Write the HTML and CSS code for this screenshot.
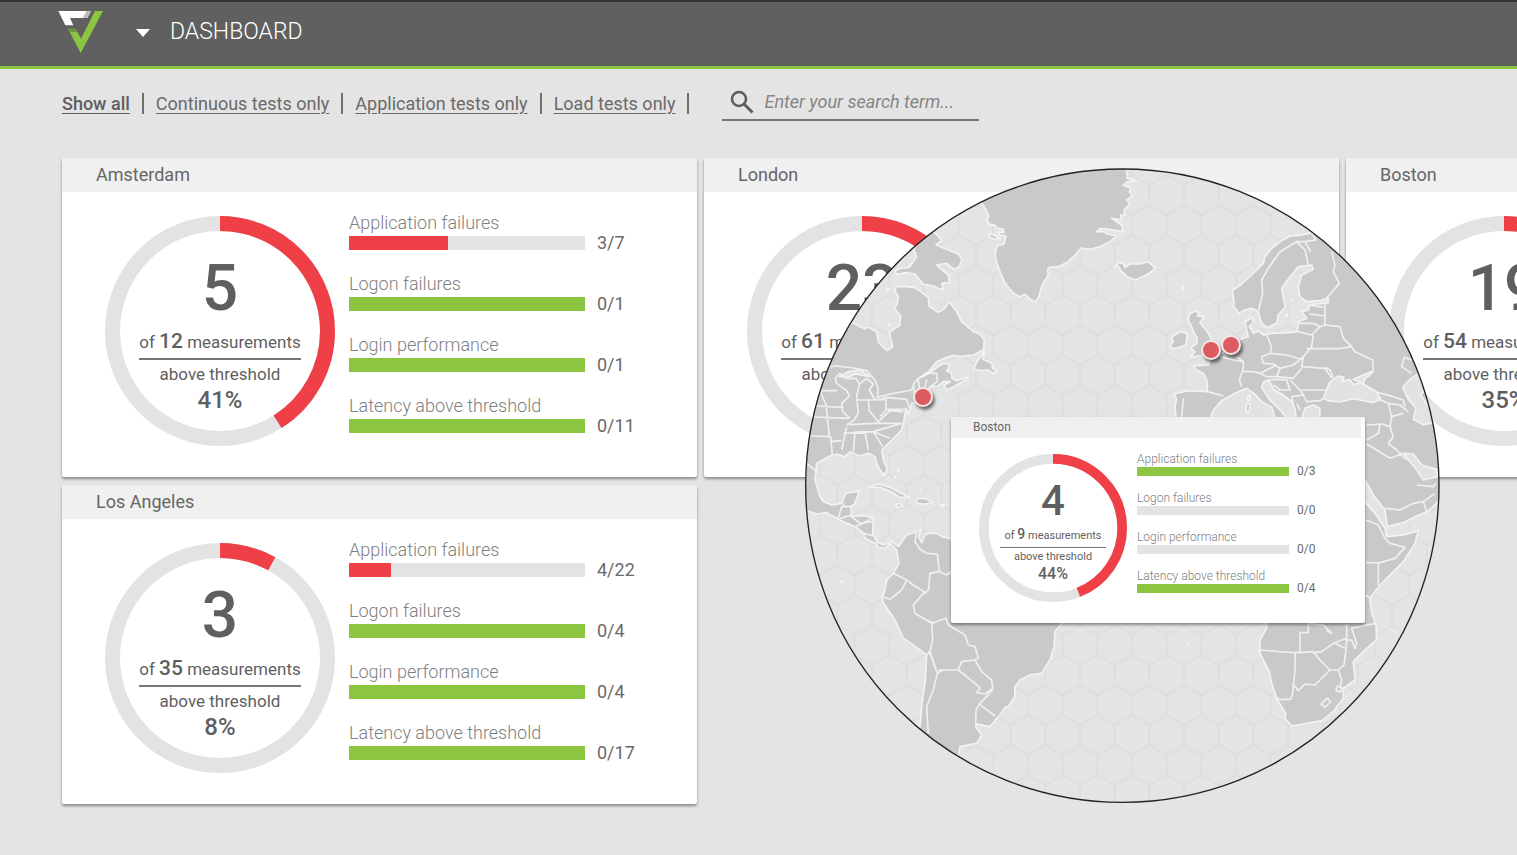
FILE: index.html
```html
<!DOCTYPE html>
<html lang="en">
<head>
<meta charset="utf-8">
<meta name="viewport" content="width=device-width, initial-scale=1">
<title>Dashboard</title>
<link rel="stylesheet" href="styles.css">
</head>
<body>
<header class="topbar">
  <svg class="logo" viewBox="176 32 138 130" aria-hidden="true">
    <path fill="#fff" d="M177 34H275L264 55H212L222 77H198Z"/>
    <path fill="#bdbdbd" d="M262 34H275L264 55H250Z"/>
    <path fill="#8cc540" d="M287 34H311L244 160L206 87H229L245 117Z"/>
    <path fill="#6f9440" d="M206 87H229L234 97H211Z"/>
  </svg>
  <button class="menu-toggle" type="button" aria-label="Open menu"><svg viewBox="0 0 14 8"><path fill="#fff" d="M0 0H14L7 8Z"/></svg></button>
  <h1 class="page-title">DASHBOARD</h1>
</header>
<main class="page">
  <div class="toolbar">
    <nav class="filters">
      <a class="filter filter-active" href="#all">Show all</a>
      <a class="filter" href="#continuous">Continuous tests only</a>
      <a class="filter" href="#application">Application tests only</a>
      <a class="filter" href="#load">Load tests only</a>
    </nav>
    <label class="search">
      <svg class="search-icon" viewBox="0 0 24 24" aria-hidden="true"><g fill="none" stroke="#5f5f5f"><circle cx="9" cy="9" r="7" stroke-width="2.6"/><path stroke-width="3" d="M14 14L22.500 22.500"/></g></svg>
      <input class="search-input" type="search" aria-label="Search" placeholder="Enter your search term...">
    </label>
  </div>
  <div class="board">
    <article class="card">
      <h2 class="card-title">Amsterdam</h2>
      <div class="card-body">
        <div class="donut">
          <svg viewBox="0 0 230 230"><circle class="track" cx="115" cy="115" r="107.500"/><circle class="arc" cx="115" cy="115" r="107.500" pathLength="100" stroke-dasharray="41 100"/></svg>
          <div class="summary"><b class="count">5</b><span class="total">of <b>12</b> measurements</span><span class="above">above threshold</span><b class="percent">41%</b></div>
        </div>
        <ul class="metrics">
          <li><span class="label">Application failures</span><span class="bar"><i class="fill bad" style="width:42%"></i></span><span class="value">3/7</span></li>
          <li><span class="label">Logon failures</span><span class="bar"><i class="fill"></i></span><span class="value">0/1</span></li>
          <li><span class="label">Login performance</span><span class="bar"><i class="fill"></i></span><span class="value">0/1</span></li>
          <li><span class="label">Latency above threshold</span><span class="bar"><i class="fill"></i></span><span class="value">0/11</span></li>
        </ul>
      </div>
    </article>
    <article class="card">
      <h2 class="card-title">London</h2>
      <div class="card-body">
        <div class="donut">
          <svg viewBox="0 0 230 230"><circle class="track" cx="115" cy="115" r="107.500"/><circle class="arc" cx="115" cy="115" r="107.500" pathLength="100" stroke-dasharray="37 100"/></svg>
          <div class="summary"><b class="count">23</b><span class="total">of <b>61</b> measurements</span><span class="above">above threshold</span></div>
        </div>
      </div>
    </article>
    <article class="card">
      <h2 class="card-title">Boston</h2>
      <div class="card-body">
        <div class="donut">
          <svg viewBox="0 0 230 230"><circle class="track" cx="115" cy="115" r="107.500"/><circle class="arc" cx="115" cy="115" r="107.500" pathLength="100" stroke-dasharray="35 100"/></svg>
          <div class="summary"><b class="count">19</b><span class="total">of <b>54</b> measurements</span><span class="above">above threshold</span><b class="percent">35%</b></div>
        </div>
      </div>
    </article>
    <article class="card">
      <h2 class="card-title">Los Angeles</h2>
      <div class="card-body">
        <div class="donut">
          <svg viewBox="0 0 230 230"><circle class="track" cx="115" cy="115" r="107.500"/><circle class="arc" cx="115" cy="115" r="107.500" pathLength="100" stroke-dasharray="8 100"/></svg>
          <div class="summary"><b class="count">3</b><span class="total">of <b>35</b> measurements</span><span class="above">above threshold</span><b class="percent">8%</b></div>
        </div>
        <ul class="metrics">
          <li><span class="label">Application failures</span><span class="bar"><i class="fill bad" style="width:18%"></i></span><span class="value">4/22</span></li>
          <li><span class="label">Logon failures</span><span class="bar"><i class="fill"></i></span><span class="value">0/4</span></li>
          <li><span class="label">Login performance</span><span class="bar"><i class="fill"></i></span><span class="value">0/4</span></li>
          <li><span class="label">Latency above threshold</span><span class="bar"><i class="fill"></i></span><span class="value">0/17</span></li>
        </ul>
      </div>
    </article>
  </div>
</main>
<section class="map" aria-label="Locations">
  <svg class="map-art" viewBox="12 24 1908 1908">
    <defs>
      <clipPath id="globe"><circle cx="967" cy="977" r="950"/></clipPath>
      <pattern id="hex" x="788" y="1424" width="104" height="180" patternUnits="userSpaceOnUse">
        <path fill="none" stroke="#dbdbdb" stroke-width="4" d="M0 0V61L52 91L104 61V0M52 91V151L0 181M52 151L104 181M0 1L52 -29L104 1"/>
      </pattern>
    </defs>
    <g clip-path="url(#globe)">
      <rect width="1940" height="1940" fill="#e4e4e4"/>
      <rect width="1940" height="1940" fill="url(#hex)"/>
      <g class="land">
        <path d="M545 130L557 148L567 168L560 180L568 192L585 196L590 204L610 208L612 218L596 216L600 226L618 228L612 252L592 258L586 275L588 300L600 335L615 370L640 400L660 410L675 403L690 418L708 425L718 405L725 378L745 345L742 330L748 322L775 320L805 305L830 280L843 264L870 268L900 260L930 245L950 228L920 221L915 216L890 215L900 206L930 208L970 215L965 195L935 175L965 180L962 165L975 165L972 150L990 132L980 120L998 108L988 96L992 84L970 76L980 66L1008 62L982 55L978 20L700 0L530 60Z"/>
        <path d="M568 222L582 225L602 236L582 238L568 232Z"/>
        <path d="M400 215L415 228L424 242L408 255L440 268L475 282L486 298L478 320L462 328L440 310L410 315L445 345L449 368L425 370L430 388L415 385L400 378L370 372L345 342L318 338L290 343L285 333L300 325L328 322L350 290L342 272L345 250L370 215Z"/>
        <path d="M155 487L180 500L195 506L205 502L230 515L235 545L250 562L262 572L278 560L268 518L285 505L300 495L302 468L283 445L292 430L295 410L285 392L288 380L320 380L345 383L385 412L388 440L415 457L435 445L448 425L470 455L485 485L520 515L540 522L553 540L550 570L520 585L480 590L460 586L440 592L410 605L385 635L355 656L390 638L425 612L445 610L448 622L440 632L455 640L456 655L470 662L505 650L500 658L462 680L440 690L432 675L450 665L430 665L415 678L395 680L370 692L362 720L345 728L335 730L325 765L318 745L312 780L305 810L275 840L245 870L250 900L262 930L250 945L232 915L225 890L205 880L180 888L150 875L135 890L112 882L90 888L50 910L45 960L60 1010L70 1025L95 1035L125 1030L138 1000L178 993L165 1030L152 1040L155 1068L185 1067L220 1072L218 1120L230 1145L250 1155L275 1145L295 1160L320 1125L350 1115L362 1108L355 1130L365 1148L375 1125L385 1120L410 1120L425 1130L450 1135L600 1200L800 1350L785 1390L765 1415L762 1460L750 1500L725 1540L690 1545L660 1560L645 1580L644 1610L625 1640L615 1642L600 1665L588 1678L570 1700L530 1692L527 1700L545 1725L530 1750L480 1760L475 1785L470 1860L300 1800L360 1700L365 1640L376 1560L380 1485L350 1462L310 1435L285 1380L248 1325L248 1310L255 1290L260 1260L280 1240L297 1210L290 1170L270 1150L255 1165L235 1162L230 1152L195 1135L192 1120L165 1100L120 1080L80 1058L50 1062L20 1052L-20 1000L0 700Z"/>
        <path d="M520 628L532 605L555 570L548 598L575 610L578 625L590 635L582 642L565 630L545 632Z"/>
        <path d="M942 320L955 307L970 310L975 322L990 312L1020 312L1045 305L1066 326L1040 345L1005 360L985 352L965 335L952 315Z"/>
        <path d="M1168 462L1185 453L1198 458L1192 468L1212 470L1200 488L1222 515L1238 545L1262 570L1250 590L1210 585L1172 592L1185 575L1172 565L1192 548L1190 530L1182 520L1175 500L1165 480Z"/>
        <path d="M1115 530L1130 522L1138 515L1162 520L1158 555L1125 566L1108 560L1120 545Z"/>
        <path d="M1355 445L1330 452L1318 460L1300 440L1302 425L1297 392L1325 372L1355 345L1390 310L1395 290L1415 265L1440 245L1470 228L1500 226L1535 218L1600 150L1930 500L1930 1000L1905 1035L1880 1055L1845 1070L1810 1088L1762 1100L1755 1050L1720 1005L1698 965L1600 900V850H1125L1128 770L1125 740L1130 718L1122 702L1165 692L1222 695L1222 665L1210 640L1185 628L1182 618L1225 615L1230 600L1260 585L1290 560L1315 540L1345 530L1340 510L1335 485L1360 472L1358 490L1348 500L1360 520L1375 512L1390 525L1415 520L1470 518L1492 515L1495 485L1520 475L1505 455L1525 450L1528 435L1585 428L1585 415L1560 422L1520 425L1500 410L1495 380L1505 345L1540 328L1535 315L1495 320L1470 350L1445 385L1450 415L1456 440L1435 465L1430 490L1400 503L1385 490L1375 455Z"/>
        <path d="M1600 1000L1698 1030L1725 1060L1745 1090L1755 1105L1760 1130L1810 1125L1855 1113L1845 1150L1810 1205L1740 1275L1710 1315L1715 1360L1728 1395L1730 1440L1700 1465L1660 1505L1665 1560L1630 1585L1630 1615L1600 1655L1565 1682L1520 1690L1475 1698L1455 1675L1457 1660L1430 1615L1415 1570L1408 1535L1380 1480L1380 1440L1400 1405L1405 1100Z"/>
        <path d="M208 980L235 972L270 982L300 998L328 1011L300 1012L275 996L240 982ZM352 1015L375 1015L400 1028L375 1032L350 1030ZM285 1033L300 1030L308 1038L292 1042ZM418 1034L435 1035L430 1040Z"/>
      </g>
      <g class="sea">
        <path d="M1225 790L1240 750L1265 722L1305 700L1340 685L1362 700L1385 725L1415 742L1430 790ZM1470 790L1445 755L1408 718L1385 682L1392 664L1408 662L1420 688L1450 705L1475 725L1485 745L1490 790ZM1500 790L1515 745L1540 735L1560 745L1558 790Z"/>
        <path d="M1570 715L1580 690L1588 668L1615 648L1632 652L1625 665L1650 658L1660 674L1685 668L1660 658L1690 645L1720 632L1710 645L1695 655L1690 672L1730 695L1742 718L1720 728L1690 722L1660 716L1620 726L1585 722Z"/>
        <path d="M1808 682L1830 658L1855 640L1875 690L1862 705L1890 745L1905 788L1870 794L1840 778L1848 745L1825 718Z"/>
        <path d="M1810 880L1840 882L1865 915L1910 928L1912 950L1870 960L1850 930L1830 905Z"/>
        <path d="M118 650L145 635L180 630L210 650L190 646L165 642L150 650Z"/>
      </g>
      <g class="borders">
        <path d="M90 620L110 618L160 624L200 632L225 660L235 685L232 712L270 702L335 690L342 670L355 656M105 655L110 670L140 692L148 708L125 730L128 755L150 775M105 655L120 640L138 656L168 655L178 672L170 710M178 672L200 655L220 672L208 690L225 720L245 718L258 712L320 718L328 745M60 692H112M48 738L130 742M40 771L145 775M28 828L92 830M60 692L78 735L88 830M170 710L175 760L160 782L140 795M170 720H205L208 752L235 785L270 752L310 755M205 720L258 718V750L240 770M258 748H320M148 794L220 790L305 790M92 830L97 888M90 845L125 842M125 870L140 800M160 875L165 816L220 815L248 860M195 816L205 870M130 820L220 815L305 790M220 815L270 835M340 670L345 720M355 660L360 700M380 658L375 680M390 640L410 640L412 665L390 680M20 910L50 935M115 1075L125 1040H150M155 1065L120 1075M130 1040L132 1030M220 1072L190 1090L165 1100M192 1120L230 1130M150 1065L180 1090L218 1085"/>
        <path d="M350 1115L345 1145L360 1168L380 1180L412 1182L418 1235L390 1240L386 1290L370 1300L340 1335L345 1360L375 1378L395 1390L398 1440L390 1475L412 1540L400 1590L380 1640L385 1720M280 1240L320 1260L340 1275L380 1300M260 1260L255 1280M320 1260L305 1290L270 1318L248 1310M418 1235L440 1245L455 1232M375 1378L400 1388L438 1375L445 1395L495 1425L505 1455L525 1460L535 1495L525 1500L485 1505L475 1530L415 1530M380 1485L388 1475L412 1540L430 1530L475 1530L525 1570L540 1585L530 1598L555 1602L578 1585L575 1560L545 1535L525 1500M578 1590L540 1630L528 1650L527 1695M540 1634L585 1668"/>
        <path d="M1535 220L1548 240L1515 245L1490 245L1440 275L1405 325L1385 360L1388 400L1375 455M1490 245L1515 270L1525 315M1515 245L1532 275M1595 275L1605 315L1600 335L1618 370L1575 420M1575 430V495L1620 500L1630 535L1655 560M1525 435L1570 442M1528 462L1575 468M1495 490L1540 490L1560 500L1575 495M1540 525L1535 560L1510 590M1495 515L1535 525L1560 500M1520 566L1620 566L1655 560L1665 575L1718 600L1720 632M1400 525L1415 560L1410 580L1385 590L1390 610L1420 612L1440 625L1480 615L1510 590L1505 620L1575 625L1595 655M1410 580L1460 585L1510 600M1310 590L1330 605V625L1318 660L1325 680M1330 635L1360 635L1380 640L1400 630L1430 615M1260 590L1300 600L1330 605M1380 640L1400 650L1430 650L1440 625M1430 650L1480 655L1505 625M1400 660L1435 658L1460 660L1470 690L1440 690L1420 675M1470 660L1500 690L1510 705L1475 710L1480 730M1500 690L1580 690M1510 705L1520 725L1560 722L1572 715M1490 730L1500 750M1222 695L1270 708M1150 715L1145 770M1725 695L1780 710L1810 720L1815 740M1730 715L1765 730L1800 735L1825 755M1765 730L1775 770L1770 800M1700 795L1745 792L1770 800L1780 830L1765 850L1790 870L1820 900M1740 792L1735 820L1700 840M1700 852L1770 895L1810 880M1775 770L1810 760M1850 975L1900 980L1908 970M1870 1025L1880 1055M1755 1045L1800 1050L1840 1030L1870 1025L1905 1000M1835 640L1805 620L1812 592L1835 600M1575 622L1590 630L1600 655"/>
        <path d="M1698 1080L1735 1095L1755 1135L1770 1150L1815 1162L1785 1195L1740 1208H1700M1735 1210V1275M1698 1305L1710 1315M1380 1470L1450 1476L1500 1478L1540 1475M1485 1480V1530L1478 1600L1472 1618H1440L1430 1615M1478 1570L1495 1592L1515 1572L1545 1575L1590 1530L1560 1500L1540 1475M1500 1475V1418H1525V1390L1570 1395L1595 1420L1580 1412M1540 1478L1565 1475L1600 1450L1640 1435L1638 1470L1632 1515L1615 1530L1590 1530M1605 1450L1635 1465M1615 1530L1625 1560L1620 1580L1630 1585M1640 1380V1440L1655 1440L1665 1465L1670 1450L1655 1405L1700 1395L1728 1390M1563 1632L1582 1615L1592 1626L1575 1642ZM1612 1578L1625 1582L1622 1596L1608 1592Z"/>
      </g>
      <g class="islets"><circle cx="126" cy="1264" r="4"/><circle cx="264" cy="388" r="5"/><circle cx="268" cy="494" r="5"/><circle cx="1150" cy="384" r="5"/><circle cx="1760" cy="1401" r="3"/><circle cx="1784" cy="1415" r="3"/><circle cx="295" cy="932" r="4"/><circle cx="286" cy="952" r="4"/><circle cx="362" cy="990" r="3"/><circle cx="1165" cy="1453" r="3"/><circle cx="1460" cy="467" r="5"/><circle cx="1478" cy="421" r="4"/></g>
      <path class="island" d="M1340 730L1350 732L1348 755L1338 755ZM1344 710L1350 705V722L1343 722Z"/>
    </g>
    <circle cx="967" cy="977" r="950" fill="none" stroke="#222" stroke-width="4"/>
  </svg>
  <button class="pin pin-boston" type="button" aria-label="Boston"></button>
  <button class="pin pin-london" type="button" aria-label="London"></button>
  <button class="pin pin-amsterdam" type="button" aria-label="Amsterdam"></button>
  <article class="card card-small">
    <h2 class="card-title">Boston</h2>
    <div class="card-body">
      <div class="donut">
        <svg viewBox="0 0 230 230"><circle class="track" cx="115" cy="115" r="107.500"/><circle class="arc" cx="115" cy="115" r="107.500" pathLength="100" stroke-dasharray="44 100"/></svg>
        <div class="summary"><b class="count">4</b><span class="total">of <b>9</b> measurements</span><span class="above">above threshold</span><b class="percent">44%</b></div>
      </div>
      <ul class="metrics">
        <li><span class="label">Application failures</span><span class="bar"><i class="fill"></i></span><span class="value">0/3</span></li>
        <li><span class="label">Logon failures</span><span class="bar"></span><span class="value">0/0</span></li>
        <li><span class="label">Login performance</span><span class="bar"></span><span class="value">0/0</span></li>
        <li><span class="label">Latency above threshold</span><span class="bar"><i class="fill"></i></span><span class="value">0/4</span></li>
      </ul>
    </div>
  </article>
</section>
</body>
</html>
```
FILE: styles.css
```css
* { box-sizing: border-box; }

body {
  position: relative;
  margin: 0;
  min-height: 100vh;
  overflow: hidden;
  background: #e4e4e4;
  color: #5f5f5f;
  font-family: Roboto, "Liberation Sans", sans-serif;
  font-size: 18px;
}

.topbar {
  display: flex;
  align-items: center;
  height: 69px;
  padding: 0 0 4px 58px;
  background: #606060;
  border-top: 2px solid #333;
  border-bottom: 3px solid #8cc540;
}
.logo { width: 46px; height: 44px; }
.menu-toggle {
  display: flex;
  margin: 2px 0 0 26px;
  padding: 6px;
  border: 0;
  background: none;
}
.menu-toggle svg { width: 14px; height: 8px; }
.page-title {
  margin: 0 0 0 14px;
  color: #fff;
  font-size: 23px;
  font-weight: 300;
  line-height: 28px;
}

.page { padding: 19px 0 0 62px; }
.toolbar { display: flex; align-items: flex-start; height: 70px; }
.filters { display: flex; padding-top: 5px; }
.filter {
  display: flex;
  color: #6a6a6a;
  line-height: 22px;
  text-decoration: underline;
  text-underline-offset: 3px;
}
.filter-active { color: #5f5f5f; font-weight: 500; }
.filter::after {
  content: "";
  width: 2px;
  height: 21px;
  margin: 0 12px;
  background: #707070;
}
.search {
  display: flex;
  align-items: center;
  width: 257px;
  height: 33px;
  margin-left: 21px;
  padding: 0 0 4px 8px;
  border-bottom: 2px solid #777;
}
.search-icon { width: 24px; height: 24px; flex: none; }
.search-input {
  width: 100%;
  margin-left: 10px;
  padding: 0;
  border: 0;
  outline: 0;
  background: none;
  color: #5f5f5f;
  font: italic 18px/22px Roboto, "Liberation Sans", sans-serif;
}
.search-input::placeholder { color: #858585; opacity: 1; }

.board {
  isolation: isolate;
  display: grid;
  grid-template-columns: repeat(3, 635px);
  gap: 8px 7px;
}

.card {
  --donut: 230px;
  --bar: 236px;
  --bar-height: 14px;
  --label: 18px;
  --label-line: 26px;
  --row-gap: 21px;
  background: #fff;
  border-radius: 2px;
  box-shadow: 0 2px 3px rgba(0, 0, 0, .4);
}
.card-title {
  margin: 0;
  padding: 0 34px;
  background: #f0f0f0;
  color: #666;
  font-size: 18px;
  font-weight: 400;
  line-height: 34px;
}
.card-body {
  display: flex;
  gap: 14px;
  padding: 24px 43px 31px;
}
.donut { display: grid; flex: none; width: var(--donut); height: var(--donut); }
.donut svg { grid-area: 1 / 1; width: 100%; height: 100%; transform: rotate(-90deg); }
.donut circle { fill: none; stroke-width: 15; }
.track { stroke: #e3e3e3; }
.arc { stroke: #ef4048; }
.summary {
  grid-area: 1 / 1;
  z-index: 1;
  display: flex;
  flex-direction: column;
  align-items: center;
  padding-top: 40px;
  font-size: 17px;
}
.summary b { font-weight: 500; }
.count { font-size: 64px; line-height: 66px; }
.total {
  padding: 3px 0 0;
  border-bottom: 2px solid #777;
  line-height: 32px;
  white-space: nowrap;
}
.total b { font-size: 21px; }
.above { line-height: 28px; }
.percent { font-size: 24px; line-height: 24px; }
.metrics {
  display: flex;
  flex-direction: column;
  gap: var(--row-gap);
  margin: 0;
  padding: 0;
  list-style: none;
}
.metrics li {
  display: grid;
  grid-template-columns: var(--bar) auto;
  grid-template-rows: var(--label-line) var(--bar-height);
  column-gap: 12px;
  align-items: center;
  font-size: var(--label);
}
.label { grid-column: 1 / 3; color: #808080; font-weight: 300; line-height: 18px; white-space: nowrap; }
.bar { height: 100%; background: #e3e3e3; }
.fill { display: block; width: 100%; height: 100%; background: #8cc540; }
.fill.bad { background: #ef4048; }
.value { color: #6a6a6a; line-height: 14px; }
.board .metrics { margin-top: -6px; }

.map { position: absolute; left: 804px; top: 168px; width: 636px; height: 636px; }
.map-art { display: block; width: 100%; height: 100%; }
.land path, .island { fill: #c9c9c9; stroke: #f3f3f3; stroke-width: 5; stroke-linejoin: round; }
.sea path { fill: #e2e2e2; stroke: #f3f3f3; stroke-width: 5; stroke-linejoin: round; }
.borders path { fill: none; stroke: #f0f0f0; stroke-width: 5; stroke-linejoin: round; }
.islets { fill: #f5f5f5; }
.pin {
  position: absolute;
  width: 20px;
  height: 20px;
  padding: 0;
  border: 2px solid #f5e8e8;
  border-radius: 50%;
  background: #dc5c62;
  box-shadow: 2px 3px 3px rgba(0, 0, 0, .5);
}
.pin-boston { left: 109px; top: 219px; }
.pin-london { left: 397px; top: 172px; }
.pin-amsterdam { left: 417px; top: 167px; }

.card-small {
  --donut: 148px;
  --bar: 152px;
  --bar-height: 9px;
  --label: 12px;
  --label-line: 16px;
  --row-gap: 14px;
  position: absolute;
  left: 147px;
  top: 249px;
  width: 414px;
  border-right: 4px solid #fcfcfc;
  font-size: 12px;
}
.card-small .card-title { padding: 0 22px; font-size: 12px; line-height: 21px; }
.card-small .card-body { gap: 10px; padding: 16px 28px 21px; }
.card-small .summary { padding-top: 25px; font-size: 11px; }
.card-small .count { font-size: 42px; line-height: 44px; }
.card-small .total { padding: 1px 4px; border-width: 1px; line-height: 20px; }
.card-small .total b { font-size: 14px; }
.card-small .above { line-height: 18px; }
.card-small .percent { font-size: 16px; line-height: 15px; }
.card-small .metrics { margin-top: -3px; }
.card-small .metrics li { column-gap: 8px; }
.card-small .value { line-height: 9px; }
```
